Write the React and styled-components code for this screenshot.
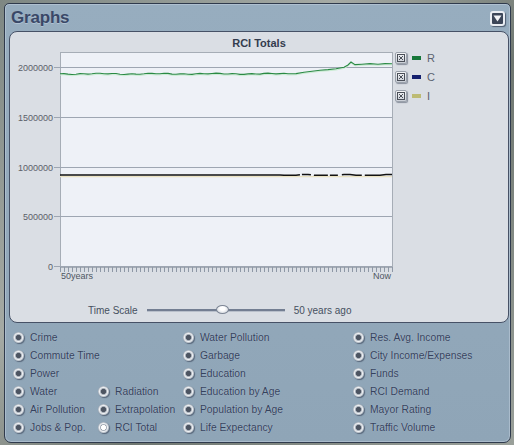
import React from 'react';
import styled, { createGlobalStyle } from 'styled-components';

const GlobalStyle = createGlobalStyle`
  html, body {
    margin: 0;
    padding: 0;
  }
  body {
    width: 514px;
    height: 445px;
    overflow: hidden;
    font-family: "Liberation Sans", Arial, sans-serif;
    background: linear-gradient(135deg, #7e8783 0%, #a5aaa4 35%, #6f7771 60%, #9aa09a 100%);
  }
`;

const options = [
  { label: 'Crime', col: 1, row: 1 },
  { label: 'Commute Time', col: 1, row: 2 },
  { label: 'Power', col: 1, row: 3 },
  { label: 'Water', col: 1, row: 4 },
  { label: 'Air Pollution', col: 1, row: 5 },
  { label: 'Jobs & Pop.', col: 1, row: 6 },
  { label: 'Radiation', col: 2, row: 4 },
  { label: 'Extrapolation', col: 2, row: 5 },
  { label: 'RCI Total', col: 2, row: 6, checked: true },
  { label: 'Water Pollution', col: 3, row: 1 },
  { label: 'Garbage', col: 3, row: 2 },
  { label: 'Education', col: 3, row: 3 },
  { label: 'Education by Age', col: 3, row: 4 },
  { label: 'Population by Age', col: 3, row: 5 },
  { label: 'Life Expectancy', col: 3, row: 6 },
  { label: 'Res. Avg. Income', col: 4, row: 1 },
  { label: 'City Income/Expenses', col: 4, row: 2 },
  { label: 'Funds', col: 4, row: 3 },
  { label: 'RCI Demand', col: 4, row: 4 },
  { label: 'Mayor Rating', col: 4, row: 5 },
  { label: 'Traffic Volume', col: 4, row: 6 },
];

const legend = [
  { key: 'R', color: '#17773a' },
  { key: 'C', color: '#14206e' },
  { key: 'I', color: '#bdbb74' },
];

const yAxis = [
  { label: '2000000', y: 17 },
  { label: '1500000', y: 67 },
  { label: '1000000', y: 117 },
  { label: '500000', y: 166 },
  { label: '0', y: 216 },
];

// residential line, real screen coords shifted into svg space
function greenPoints() {
  const pts = [];
  for (let x = 60; x <= 290; x += 4) {
    const y = 73.8 + Math.sin(x * 0.37) * 0.4 + Math.sin(x * 0.11) * 0.35;
    pts.push([x, y]);
  }
  [
    [296, 73.6], [304, 72.2], [312, 71.2], [320, 70.2], [328, 69.6],
    [336, 68.8], [344, 67.2], [348, 65], [351, 62], [355, 64.6],
    [362, 64.2], [370, 63.6], [378, 64.2], [385, 63.6], [392, 63.8],
  ].forEach(p => pts.push(p));
  return pts.map(([x, y]) => `${x - 10},${(y - 50).toFixed(1)}`).join(' ');
}

function blackPoints() {
  const pts = [[60, 175], [280, 175]];
  for (let x = 284; x <= 392; x += 6) {
    pts.push([x, 175 + (Math.sin(x * 0.9) > 0.6 ? -0.6 : 0.2)]);
  }
  return pts.map(([x, y]) => `${x - 10},${(y - 50).toFixed(1)}`).join(' ');
}

function Chart() {
  const ticks = [];
  for (let x = 50; x <= 382; x += 4) ticks.push(x);
  return (
    <svg width="385" height="236" viewBox="0 0 385 236">
      <rect x="50.5" y="2.5" width="332" height="215" fill="#eef1f7" stroke="#a6adb6" />
      {yAxis.map(a => (
        <g key={a.label}>
          <line x1="44" x2="382" y1={a.y + 0.5} y2={a.y + 0.5} stroke="#9ea6b2" />
          <text x="43" y={a.y + 3.5} fontSize="9" textAnchor="end" fill="#5a6069" fontFamily="Liberation Sans, Arial, sans-serif">
            {a.label}
          </text>
        </g>
      ))}
      {ticks.map(x => (
        <line key={x} x1={x + 0.5} x2={x + 0.5} y1="217" y2="222" stroke="#8e98a6" />
      ))}
      <polyline points={greenPoints()} fill="none" stroke="#c9ecd2" strokeWidth="1" transform="translate(0,1.2)" />
      <polyline points={greenPoints()} fill="none" stroke="#2a8a44" strokeWidth="1.1" />
      <line x1="50" x2="382" y1="126.6" y2="126.6" stroke="#ebe3c2" strokeWidth="1.4" />
      <polyline points={blackPoints()} fill="none" stroke="#121212" strokeWidth="1.5" strokeDasharray="240 2 9 3 14 2 8 4 20 3" />
      <text x="51" y="229" fontSize="9" fill="#4f5662" fontFamily="Liberation Sans, Arial, sans-serif">50years</text>
      <text x="381" y="229" fontSize="9" textAnchor="end" fill="#4f5662" fontFamily="Liberation Sans, Arial, sans-serif">Now</text>
    </svg>
  );
}

function CheckIcon() {
  return (
    <svg width="8" height="8" viewBox="0 0 8 8">
      <rect x="0.5" y="0.5" width="7" height="7" fill="none" stroke="#4a4f58" />
      <path d="M2 2 L6 6 M6 2 L2 6" stroke="#4a4f58" strokeWidth="1" />
    </svg>
  );
}

export default function App() {
  return (
    <>
      <GlobalStyle />
      <Window>
        <Header>
          <Title>Graphs</Title>
          <CollapseButton>
            <svg width="9" height="7" viewBox="0 0 9 7">
              <path d="M0.5 0.5 L8.5 0.5 L4.5 6.5 Z" fill="#f2f4f7" />
            </svg>
          </CollapseButton>
        </Header>
        <Panel>
          <ChartTitle>RCI Totals</ChartTitle>
          <ChartRow>
            <Chart />
            <Legend>
              {legend.map(l => (
                <LegendItem key={l.key}>
                  <CheckBox>
                    <CheckIcon />
                  </CheckBox>
                  <Swatch $color={l.color} />
                  <LegendLabel>{l.key}</LegendLabel>
                </LegendItem>
              ))}
            </Legend>
          </ChartRow>
          <SliderRow>
            <SliderLabel>Time Scale</SliderLabel>
            <Track>
              <Thumb />
            </Track>
            <SliderLabel>50 years ago</SliderLabel>
          </SliderRow>
        </Panel>
        <OptionGrid>
          {options.map(o => (
            <Option key={o.label} $col={o.col} $row={o.row}>
              <Radio $checked={o.checked} />
              <OptionLabel>{o.label}</OptionLabel>
            </Option>
          ))}
        </OptionGrid>
      </Window>
    </>
  );
}

/* CSS */
const Window = styled.div`
  box-sizing: border-box;
  margin: 3px 0 0 4px;
  width: 507px;
  height: 440px;
  background: linear-gradient(180deg, #97adbf 0%, #8fa5b7 100%);
  border: 1px solid #2f3a4c;
  border-radius: 5px 5px 7px 7px;
  box-shadow: inset 0 0 0 1px rgba(220, 230, 240, 0.35);
  display: flex;
  flex-direction: column;
`;

const Header = styled.div`
  height: 27px;
  display: flex;
  align-items: center;
  justify-content: space-between;
  padding: 0 5px 0 6px;
`;

const Title = styled.div`
  font-size: 17px;
  font-weight: bold;
  color: #3a4867;
  letter-spacing: -0.2px;
  text-shadow: 0 1px 0 rgba(200, 215, 230, 0.5);
  margin-top: 1px;
`;

const CollapseButton = styled.div`
  box-sizing: border-box;
  width: 15px;
  height: 15px;
  margin-top: 2px;
  border-radius: 3px;
  background: #3c4658;
  border: 2px solid #e9edf2;
  box-shadow: 1px 1px 1px rgba(30, 40, 60, 0.6);
  display: flex;
  align-items: center;
  justify-content: center;
`;

const Panel = styled.div`
  box-sizing: border-box;
  margin: 0 1px 0 4px;
  height: 292px;
  background: #dadee4;
  border: 1px solid #465166;
  border-radius: 8px;
  display: flex;
  flex-direction: column;
`;

const ChartTitle = styled.div`
  height: 18px;
  padding-top: 4px;
  text-align: center;
  font-size: 11px;
  font-weight: bold;
  color: #333c4e;
  box-sizing: border-box;
  line-height: 14px;
`;

const ChartRow = styled.div`
  display: flex;
  height: 236px;
`;

const Legend = styled.div`
  display: flex;
  flex-direction: column;
  gap: 7px;
  padding-top: 2px;
`;

const LegendItem = styled.div`
  display: flex;
  align-items: center;
  height: 12px;
`;

const CheckBox = styled.div`
  box-sizing: border-box;
  width: 12px;
  height: 12px;
  border-radius: 2px;
  background: linear-gradient(180deg, #f4f5f7, #c9ced6);
  border: 1px solid #9aa1ab;
  box-shadow: 1px 1px 1px rgba(60, 70, 90, 0.5);
  display: flex;
  align-items: center;
  justify-content: center;
`;

const Swatch = styled.div`
  width: 9px;
  height: 4px;
  margin-left: 5px;
  background: ${p => p.$color};
`;

const LegendLabel = styled.span`
  margin-left: 6px;
  font-size: 11px;
  color: #5a6270;
`;

const SliderRow = styled.div`
  display: flex;
  align-items: center;
  height: 20px;
  margin-top: 14px;
  padding-left: 78px;
`;

const SliderLabel = styled.span`
  font-size: 10px;
  color: #46505f;
`;

const Track = styled.div`
  position: relative;
  width: 138px;
  height: 2px;
  margin: 0 9px;
  background: #737e92;
  border-bottom: 1px solid #b9c0cb;
`;

const Thumb = styled.div`
  position: absolute;
  left: 69px;
  top: -4px;
  width: 13px;
  height: 9px;
  box-sizing: border-box;
  border-radius: 50%;
  background: radial-gradient(ellipse at 50% 35%, #ffffff 30%, #c4cad3 100%);
  border: 1px solid #7c8594;
`;

const OptionGrid = styled.div`
  display: grid;
  grid-template-columns: 85px 85px 170px 1fr;
  grid-template-rows: repeat(6, 18px);
  padding: 5px 0 0 8px;
`;

const Option = styled.div`
  grid-column: ${p => p.$col};
  grid-row: ${p => p.$row};
  display: flex;
  align-items: center;
  white-space: nowrap;
`;

const Radio = styled.span`
  box-sizing: border-box;
  width: 11px;
  height: 11px;
  border-radius: 50%;
  flex-shrink: 0;
  background: radial-gradient(circle at 50% 50%, ${p => (p.$checked ? '#ffffff' : '#4d5562')} 0 2.2px, #9aa2ad 2.8px, #eef1f4 4px, #a9b0ba 5.5px);
  box-shadow: 1px 1px 1px rgba(40, 50, 70, 0.55);
`;

const OptionLabel = styled.span`
  margin-left: 6px;
  font-size: 10.3px;
  color: #35425d;
  text-shadow: 0 0 1px rgba(210, 222, 234, 0.6);
`;
